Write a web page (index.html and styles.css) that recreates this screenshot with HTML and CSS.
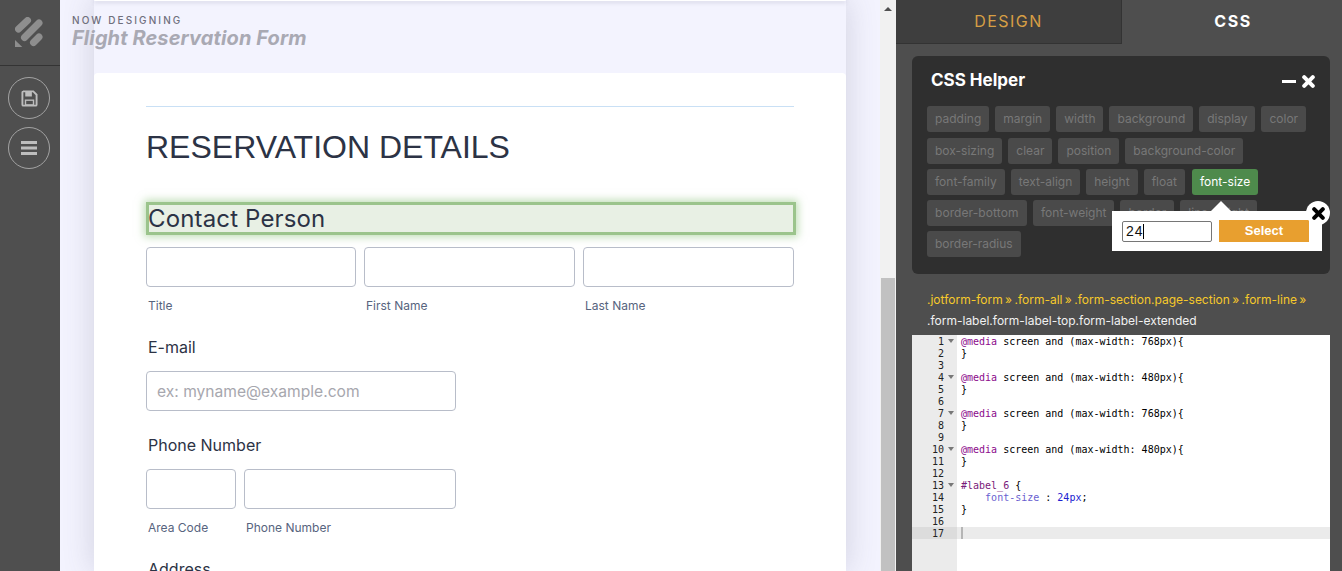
FILE: index.html
```html
<!DOCTYPE html>
<html lang="en">
<head>
<meta charset="utf-8">
<title>Flight Reservation Form</title>
<link rel="stylesheet" href="styles.css">
</head>
<body>
<div class="app">
  <aside class="rail">
    <div class="rail-logo">
      <svg width="30" height="32" viewBox="0 0 30 32"><g fill="none" stroke="#8e8e8e" stroke-width="7" stroke-linecap="round"><path d="M3.500 12 L12.500 3.500"/><path d="M9.500 20.500 L24 6"/><path d="M18.500 25.500 L24 20"/></g><path fill="#8e8e8e" d="M0 23 L7.300 30 H0 Z"/></svg>
    </div>
    <button class="rail-btn" type="button" aria-label="Save">
      <svg width="17" height="17" viewBox="0 0 18 18"><path fill="none" stroke="#bdbdbd" stroke-width="2" d="M2 1.500 H13 L16.500 5 V15.500 Q16.500 16.500 15.500 16.500 H2.500 Q1.500 16.500 1.500 15.500 V2.500 Q1.500 1.500 2.500 1.500 Z"/><path fill="#bdbdbd" d="M4.500 2 H11.500 V7 H4.500 Z M4 10 H14 V16 H4 Z"/><path fill="#4f4f4f" d="M5.500 11.500 H12.500 V15 H5.500 Z"/></svg>
    </button>
    <button class="rail-btn" type="button" aria-label="Menu">
      <svg width="16" height="14" viewBox="0 0 16 14"><path fill="#bdbdbd" d="M0 0 H16 V3 H0 Z M0 5.500 H16 V8.500 H0 Z M0 11 H16 V14 H0 Z"/></svg>
    </button>
  </aside>

  <main class="canvas">
    <div class="designing">
      <div class="designing-kicker">NOW DESIGNING</div>
      <div class="designing-title">Flight Reservation Form</div>
    </div>
    <div class="stage">
      <div class="prev-card"></div>
      <form class="form-card">
        <hr class="form-rule">
        <h1 class="form-heading">RESERVATION DETAILS</h1>
        <div class="selected-label">Contact Person</div>
        <div class="fields fields-name">
          <div class="field"><div class="input"></div><span class="sublabel">Title</span></div>
          <div class="field"><div class="input"></div><span class="sublabel">First Name</span></div>
          <div class="field"><div class="input"></div><span class="sublabel">Last Name</span></div>
        </div>
        <div class="form-label label-email">E-mail</div>
        <div class="input input-email">ex: myname@example.com</div>
        <div class="form-label label-phone">Phone Number</div>
        <div class="fields fields-phone">
          <div class="field"><div class="input"></div><span class="sublabel">Area Code</span></div>
          <div class="field"><div class="input"></div><span class="sublabel">Phone Number</span></div>
        </div>
        <div class="form-label label-address">Address</div>
      </form>
    </div>
  </main>

  <div class="scrollbar"><span class="scroll-arrow"></span><span class="scroll-thumb"></span></div>

  <section class="panel">
    <div class="tabs">
      <div class="tab tab-design">DESIGN</div>
      <div class="tab tab-css">CSS</div>
    </div>
    <div class="helper">
      <div class="helper-head">
        <h2 class="helper-title">CSS Helper</h2>
        <div class="helper-actions">
          <span class="minimize"></span>
          <svg class="close-icon" width="13" height="13" viewBox="0 0 13 13"><path stroke="#fff" stroke-width="4" stroke-linecap="round" d="M2.200 2.200 L10.800 10.800 M10.800 2.200 L2.200 10.800"/></svg>
        </div>
      </div>
      <div class="tags">
        <div class="tag-row"><span class="tag">padding</span><span class="tag">margin</span><span class="tag">width</span><span class="tag">background</span><span class="tag">display</span><span class="tag">color</span></div>
        <div class="tag-row"><span class="tag">box-sizing</span><span class="tag">clear</span><span class="tag">position</span><span class="tag">background-color</span></div>
        <div class="tag-row"><span class="tag">font-family</span><span class="tag">text-align</span><span class="tag">height</span><span class="tag">float</span><span class="tag tag-active">font-size</span></div>
        <div class="tag-row"><span class="tag tag-wide">border-bottom</span><span class="tag">font-weight</span><span class="tag">border</span><span class="tag">line-height</span></div>
        <div class="tag-row"><span class="tag">border-radius</span></div>
      </div>
      <div class="popover">
        <div class="popover-input">24<span class="caret"></span></div>
        <div class="popover-select">Select</div>
        <span class="popover-close">
          <svg width="13" height="13" viewBox="0 0 13 13"><path stroke="#000" stroke-width="4" stroke-linecap="round" d="M2.200 2.200 L10.800 10.800 M10.800 2.200 L2.200 10.800"/></svg>
        </span>
      </div>
    </div>
    <div class="crumbs">
      <div class="crumb-path">.jotform-form » .form-all » .form-section.page-section » .form-line »</div>
      <div class="crumb-current">.form-label.form-label-top.form-label-extended</div>
    </div>
    <div class="editor">
      <div class="gutter">
        <div class="ln fold">1</div><div class="ln">2</div><div class="ln">3</div><div class="ln fold">4</div><div class="ln">5</div><div class="ln">6</div><div class="ln fold">7</div><div class="ln">8</div><div class="ln">9</div><div class="ln fold">10</div><div class="ln">11</div><div class="ln">12</div><div class="ln fold">13</div><div class="ln">14</div><div class="ln">15</div><div class="ln">16</div><div class="ln ln-active">17</div>
      </div>
      <div class="code">
        <div class="cl"><span class="k">@media</span> screen and (max-width: 768px){</div>
        <div class="cl">}</div>
        <div class="cl"></div>
        <div class="cl"><span class="k">@media</span> screen and (max-width: 480px){</div>
        <div class="cl">}</div>
        <div class="cl"></div>
        <div class="cl"><span class="k">@media</span> screen and (max-width: 768px){</div>
        <div class="cl">}</div>
        <div class="cl"></div>
        <div class="cl"><span class="k">@media</span> screen and (max-width: 480px){</div>
        <div class="cl">}</div>
        <div class="cl"></div>
        <div class="cl"><span class="sel">#label_6</span> {</div>
        <div class="cl">    <span class="prop">font-size</span> : <span class="num">24px</span>;</div>
        <div class="cl">}</div>
        <div class="cl"></div>
        <div class="cl cl-active"><span class="ed-caret"></span></div>
      </div>
    </div>
  </section>
</div>
</body>
</html>
```

FILE: styles.css
```css
* { box-sizing: border-box; }
html, body { margin: 0; height: 100%; overflow: hidden; }
body { font-family: Inter, "Liberation Sans", sans-serif; color: #2c3345; }

.app { display: flex; height: 571px; width: 1342px; overflow: hidden; }

/* left rail */
.rail { width: 60px; flex: none; background: #4f4f4f; display: flex; flex-direction: column; align-items: center; }
.rail-logo { width: 100%; height: 66px; border-bottom: 1px solid #343434; display: flex; align-items: center; justify-content: center; }
.rail-btn { width: 42px; height: 42px; border: 1px solid #a3a3a3; border-radius: 50%; background: none; padding: 0; display: flex; align-items: center; justify-content: center; margin: 8px 2px 0 0; }
.rail-btn:first-of-type { margin-top: 11px; }

/* canvas */
.canvas { width: 820px; flex: none; position: relative; background: #f3f3fe; overflow: hidden; }
.designing { position: absolute; left: 12px; top: 14px; z-index: 2; }
.designing-kicker { font-size: 10px; line-height: 12px; font-weight: 500; letter-spacing: 2.100px; color: #6f6f7c; }
.designing-title { font-size: 20px; line-height: 24px; font-weight: 700; font-style: italic; letter-spacing: .1px; color: #a9a9b3; }
.stage { width: 752px; margin-left: 34px; position: relative; height: 100%; box-shadow: 0 0 30px rgba(70, 70, 100, .2); }
.prev-card { height: 1px; background: #fff; box-shadow: 0 1px 4px rgba(60, 60, 90, .45); border-radius: 0 0 4px 4px; }
.form-card { margin-top: 72px; background: #fff; padding: 33px 52px 0; height: 498px; overflow: hidden; border-radius: 4px 4px 0 0; }
.form-rule { margin: 0; border: 0; height: 1px; background: #c9e0f5; }
.form-heading { margin: 22px 0 0; font: 400 32px/36px "Liberation Sans", Arial, sans-serif; color: #2c3345; }
.selected-label { width: 650px; height: 33px; margin-top: 37px; background: #e8f0e4; border: 3px solid #9bc48c; box-shadow: 0 0 8px 2px rgba(130, 190, 110, .5); font-size: 24px; line-height: 27px; letter-spacing: .15px; text-indent: -1px; color: #2c3345; }
.fields { display: grid; gap: 8px; }
.fields-name { width: 648px; margin-top: 12px; grid-template-columns: 210px 211px 211px; }
.fields-phone { width: 310px; margin-top: 14px; grid-template-columns: 90px 212px; }
.input { height: 40px; border: 1px solid #b8bdc9; border-radius: 4px; background: #fff; }
.sublabel { display: block; margin: 11px 0 0 2px; font-size: 12px; line-height: 15px; color: #57647e; }
.form-label { font-size: 16px; line-height: 20px; margin-left: 2px; color: #2c3345; }
.label-email { margin-top: 24px; }
.input-email { width: 310px; margin-top: 14px; padding-left: 10px; font-size: 15.600px; line-height: 40px; color: #a7a7ae; }
.label-phone { margin-top: 24px; }
.label-address { margin-top: 24px; }

/* scrollbar */
.scrollbar { width: 16px; flex: none; background: #f1f1f1; position: relative; }
.scroll-arrow { position: absolute; left: 4px; top: 7px; width: 0; height: 0; border: 4px solid transparent; border-top: 0; border-bottom-color: #505050; }
.scroll-thumb { position: absolute; left: 1px; right: 1px; top: 278px; bottom: 0; background: #c1c1c1; }

/* right panel */
.panel { width: 446px; flex: none; background: #4e4e4e; position: relative; overflow: hidden; display: flex; flex-direction: column; }
.tabs { display: flex; height: 44px; flex: none; }
.tab { font-size: 16px; line-height: 43px; letter-spacing: 1.500px; text-align: center; }
.tab-design { width: 226px; background: #3e3e3e; color: #d79f45; border-right: 1px solid #333; border-bottom: 1px solid #333; }
.tab-css { flex: 1; color: #fff; font-weight: 700; padding-left: 2px; }
.helper { position: relative; flex: none; width: 418px; height: 218px; margin: 12px 0 0 16px; background: #2f2f2f; border-radius: 6px; padding: 0 15px; }
.helper-head { height: 50px; display: flex; align-items: center; justify-content: space-between; padding: 0 0 0 4px; }
.helper-title { margin: -2px 0 0; font-size: 17px; line-height: 20px; font-weight: 700; color: #fff; }
.helper-actions { display: flex; align-items: center; gap: 6px; }
.minimize { width: 14px; height: 3px; background: #fff; }
.close-icon { display: block; }
.tags { display: flex; flex-direction: column; gap: 5.500px; }
.tag-row { display: flex; gap: 6px; }
.tag-row:first-child { margin-bottom: 1px; }
.tag { height: 25.500px; padding: 0 8px; background: #4a4a4a; border-radius: 3px; font-size: 12px; line-height: 25px; color: #787878; white-space: nowrap; }
.tag-wide { letter-spacing: .08px; width: 100px; }
.tag-active { background: #4e8a4c; color: #fff; margin-left: 1px; }
.popover { position: absolute; left: 200px; top: 155px; width: 210px; height: 40px; background: #fff; display: flex; align-items: center; gap: 7px; padding: 0 13px 0 10px; }
.popover::before { content: ""; position: absolute; left: 99px; top: -10px; border: 10px solid transparent; border-top: 0; border-bottom-color: #fff; }
.popover-input { width: 90px; height: 21px; border: 1px solid #767676; border-radius: 2px; font: 14px/19px "Liberation Sans", Arial, sans-serif; letter-spacing: 1px; color: #111; padding-left: 3px; }
.caret { display: inline-block; width: 1px; height: 15px; margin-left: -1px; background: #000; vertical-align: -3px; }
.popover-select { width: 90px; height: 22px; background: #e89f2f; color: #fff; font: 700 13px/21px "Liberation Sans", Arial, sans-serif; text-align: center; }
.popover-close { position: absolute; right: -8px; top: -10px; width: 24px; height: 24px; border-radius: 50%; background: #fff; display: flex; align-items: center; justify-content: center; }
.crumbs { margin: 15px 0 0 31px; font-size: 12px; line-height: 21px; height: 46px; flex: none; white-space: nowrap; }
.crumb-path { color: #f6c92a; word-spacing: -1px; }
.crumb-current { color: #f1f1f1; }
.editor { flex: 1; width: 418px; margin-left: 16px; background: #fff; display: flex; font: 10px/14px "DejaVu Sans Mono", "Liberation Mono", monospace; color: #000; }
.gutter { width: 45px; flex: none; background: #ebebeb; color: #222; }
.ln { height: 12px; text-align: right; padding-right: 13px; position: relative; }
.fold::after { content: ""; position: absolute; right: 3px; top: 4px; border: 3px solid transparent; border-bottom: 0; border-top: 4px solid #777; }
.ln-active { background: #dcdcdc; }
.code { flex: 1; }
.cl { height: 12px; padding-left: 4px; white-space: pre; }
.cl-active { background: #ebebeb; }
.k { color: #8b0a8b; }
.sel { color: #7a1a7a; }
.prop { color: #6a5fd0; }
.num { color: #2020d0; }
.ed-caret { display: block; width: 2px; height: 12px; background: #b5b5b5; }
```
